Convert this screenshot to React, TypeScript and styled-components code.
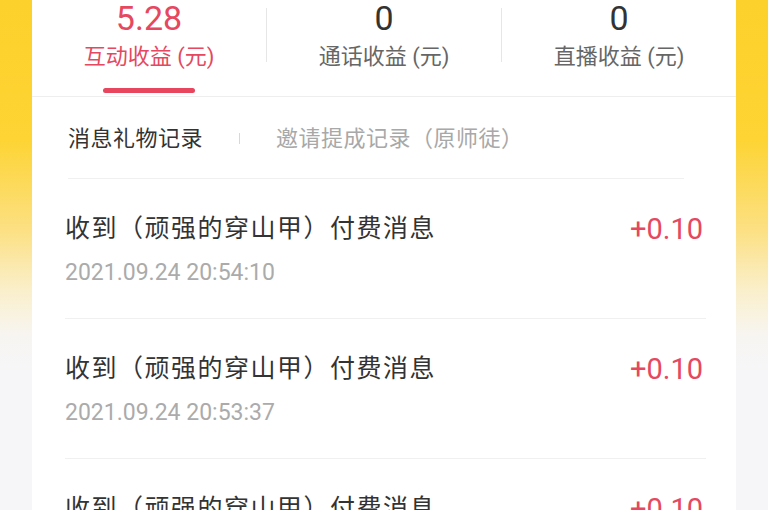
import React from "react";
import styled, { createGlobalStyle } from "styled-components";

const GlobalStyle = createGlobalStyle`
  html, body { margin: 0; padding: 0; background: #f6f6f8; }
  * { box-sizing: border-box; }
`;

const FONT = `Roboto, "Noto Sans CJK SC", "Noto Sans", sans-serif`;

const Page = styled.div`
  width: 768px;
  height: 510px;
  overflow: hidden;
  padding: 0 32px;
  font-family: ${FONT};
  background: linear-gradient(
    to bottom,
    #fdd12b 0px,
    #fdd434 140px,
    #fce083 230px,
    #faefcb 290px,
    #f7f5f1 335px,
    #f6f6f8 370px
  );
`;

const Card = styled.div`
  background: #ffffff;
  min-height: 600px;
`;

const StatsRow = styled.div`
  display: flex;
  height: 97px;
  padding-top: 2px;
  border-bottom: 1px solid #eeeeee;
`;

const Stat = styled.div`
  flex: 1;
  display: flex;
  flex-direction: column;
  align-items: center;
`;

const StatValue = styled.div<{ $active?: boolean }>`
  font-size: 34px;
  line-height: 32px;
  color: ${(p) => (p.$active ? "#e5485f" : "#333333")};
`;

const StatLabel = styled.div<{ $active?: boolean }>`
  margin-top: 10px;
  font-size: 22px;
  line-height: 26px;
  color: ${(p) => (p.$active ? "#e5485f" : "#666666")};
`;

const ActiveBar = styled.div`
  margin-top: 18px;
  width: 92px;
  height: 5px;
  border-radius: 3px;
  background: #e8455e;
`;

const VDivider = styled.div`
  width: 1px;
  height: 54px;
  margin-top: 6px;
  background: #e6e6e6;
`;

const Tabs = styled.div`
  display: flex;
  align-items: center;
  height: 82px;
  margin: 0 52px 0 36px;
  border-bottom: 1px solid #f0f0f0;
  padding-top: 2px;
`;

const Tab = styled.div<{ $active?: boolean }>`
  font-size: 22px;
  line-height: 26px;
  letter-spacing: 0.5px;
  color: ${(p) => (p.$active ? "#333333" : "#a8a8a8")};
`;

const TabSep = styled.div`
  width: 1px;
  height: 11px;
  margin: 0 36px;
  background: #d8d8d8;
`;

const List = styled.div`
  margin: 0 30px 0 33px;
`;

const Row = styled.div`
  display: flex;
  justify-content: space-between;
  align-items: flex-start;
  height: 140px;
  padding: 36px 3px 0 0;
  border-bottom: 1px solid #f0f0f0;
`;

const RowMain = styled.div`
  display: flex;
  flex-direction: column;
`;

const RowTitle = styled.div`
  font-size: 25px;
  line-height: 28px;
  letter-spacing: 1.5px;
  color: #333333;
`;

const RowDate = styled.div`
  margin-top: 17px;
  font-size: 23px;
  line-height: 26px;
  color: #ababab;
`;

const Amount = styled.div`
  font-size: 29px;
  line-height: 30px;
  margin-top: -1px;
  color: #e5485f;
`;

const stats = [
  { value: "5.28", label: "互动收益 (元)", active: true },
  { value: "0", label: "通话收益 (元)" },
  { value: "0", label: "直播收益 (元)" },
];

const records = [
  { title: "收到（顽强的穿山甲）付费消息", date: "2021.09.24 20:54:10", amount: "+0.10" },
  { title: "收到（顽强的穿山甲）付费消息", date: "2021.09.24 20:53:37", amount: "+0.10" },
  { title: "收到（顽强的穿山甲）付费消息", date: "2021.09.24 20:53:01", amount: "+0.10" },
];

export default function App() {
  return (
    <>
      <GlobalStyle />
      <Page>
        <Card>
          <StatsRow>
            {stats.map((s, i) => (
              <React.Fragment key={i}>
                {i > 0 && <VDivider />}
                <Stat>
                  <StatValue $active={s.active}>{s.value}</StatValue>
                  <StatLabel $active={s.active}>{s.label}</StatLabel>
                  {s.active && <ActiveBar />}
                </Stat>
              </React.Fragment>
            ))}
          </StatsRow>
          <Tabs>
            <Tab $active>消息礼物记录</Tab>
            <TabSep />
            <Tab>邀请提成记录（原师徒）</Tab>
          </Tabs>
          <List>
            {records.map((r, i) => (
              <Row key={i}>
                <RowMain>
                  <RowTitle>{r.title}</RowTitle>
                  <RowDate>{r.date}</RowDate>
                </RowMain>
                <Amount>{r.amount}</Amount>
              </Row>
            ))}
          </List>
        </Card>
      </Page>
    </>
  );
}
